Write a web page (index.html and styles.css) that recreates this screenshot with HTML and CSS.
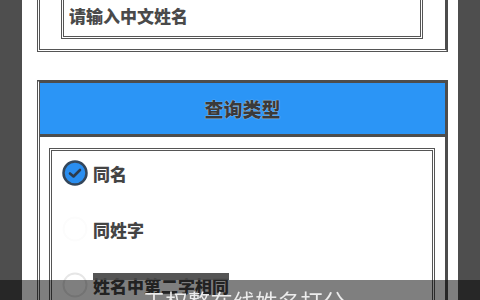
FILE: index.html
```html
<!DOCTYPE html>
<html lang="zh-CN">

<head>
    <meta charset="UTF-8">
    <meta name="viewport" content="width=device-width, initial-scale=1.0">
    <title>姓名打分</title>
    <link rel="stylesheet" href="styles.css">
</head>

<body>
    <div class="side"></div>

    <div class="main">
        <!-- 姓名输入 -->
        <div class="name-card">
            <input type="text" class="name-input" placeholder="请输入中文姓名">
        </div>

        <!-- 查询类型 -->
        <div class="panel">
            <div class="panel-head">查询类型</div>
            <div class="panel-body">
                <div class="options">
                    <label class="option">
                        <svg class="radio" width="26" height="26" viewBox="0 0 26 26">
                            <circle cx="13" cy="13" r="11.5" fill="#2a8ef0" stroke="#34465a" stroke-width="2.5" />
                            <path d="M8 13.5 L11.5 16.5 L18 10" fill="none" stroke="#2c3b4c" stroke-width="2.6" stroke-linecap="round" stroke-linejoin="round" />
                        </svg>
                        <span>同名</span>
                    </label>
                    <label class="option">
                        <svg class="radio" width="26" height="26" viewBox="0 0 26 26">
                            <circle cx="13" cy="13" r="11.5" fill="#fff" stroke="#fcfcfc" stroke-width="2" />
                        </svg>
                        <span>同姓字</span>
                    </label>
                    <label class="option">
                        <svg class="radio" width="26" height="26" viewBox="0 0 26 26">
                            <circle cx="13" cy="13" r="11.5" fill="#fff" stroke="#e6e6e6" stroke-width="2" />
                        </svg>
                        <span class="band">姓名中第二字相同</span>
                    </label>
                </div>
            </div>
        </div>
    </div>

    <div class="side"></div>

    <!-- 字幕 -->
    <div class="caption">王权整在线姓名打分</div>
</body>

</html>
```

FILE: styles.css
```css
/* 页面 */
body {
    margin: 0;
    height: 300px;
    overflow: hidden;
    display: flex;
    background-color: #fff;
    font-family: "Noto Sans CJK SC", "Noto Sans", sans-serif;
}

.side {
    width: 22px;
    flex: none;
    background-color: #4e4e4e;
}

.main {
    flex: 1;
    height: 318px;
    overflow: hidden;
    margin-top: -18px;
    padding: 0 10px 0 15px;
}

/* 姓名输入 */
.name-card {
    border: 3px double #555;
    border-right: 3px solid #4d4d4d;
    border-bottom: 3px double #555;
    padding: 10px 22px 10px 21px;
}

.name-input {
    display: block;
    box-sizing: border-box;
    width: 100%;
    height: 44px;
    padding: 0 5px;
    border: 3px double #555;
    border-top: none;
    background: #fff;
    font-family: inherit;
    font-size: 17px;
    font-weight: 900;
    outline: none;
}

.name-input::placeholder {
    color: #4a4a4a;
}

/* 查询类型 */
.panel {
    margin-top: 28px;
    border-top: 3px solid #4d4d4d;
    border-left: 3px double #555;
    border-right: 3px solid #4d4d4d;
}

.panel-head {
    height: 51px;
    display: flex;
    align-items: center;
    justify-content: center;
    background-color: #2b95f6;
    border-bottom: 3px solid #4d4d4d;
    color: #3a3a3a;
    font-size: 19px;
    font-weight: 900;
    text-shadow: 0 0 1px #fff;
}

.panel-body {
    padding: 11px 10px 0 9px;
}

.options {
    border: 3px double #555;
    border-bottom: none;
    padding: 10px 10px 20px;
    display: flex;
    flex-direction: column;
    gap: 32px;
}

.option {
    display: flex;
    align-items: center;
    gap: 5px;
    height: 24px;
    color: #444;
    font-size: 17px;
    font-weight: 900;
}

.radio {
    flex: none;
}

.band {
    background: linear-gradient(#555 0 7px, transparent 7px);
}

/* 字幕 */
.caption {
    position: fixed;
    left: 0;
    right: 0;
    bottom: 0;
    height: 20px;
    overflow: hidden;
    box-sizing: border-box;
    padding: 9px 0 0 143px;
    background-color: rgba(0, 0, 0, 0.5);
    color: #ececec;
    font-size: 22px;
    line-height: 1;
    letter-spacing: 0.5px;
}
```
